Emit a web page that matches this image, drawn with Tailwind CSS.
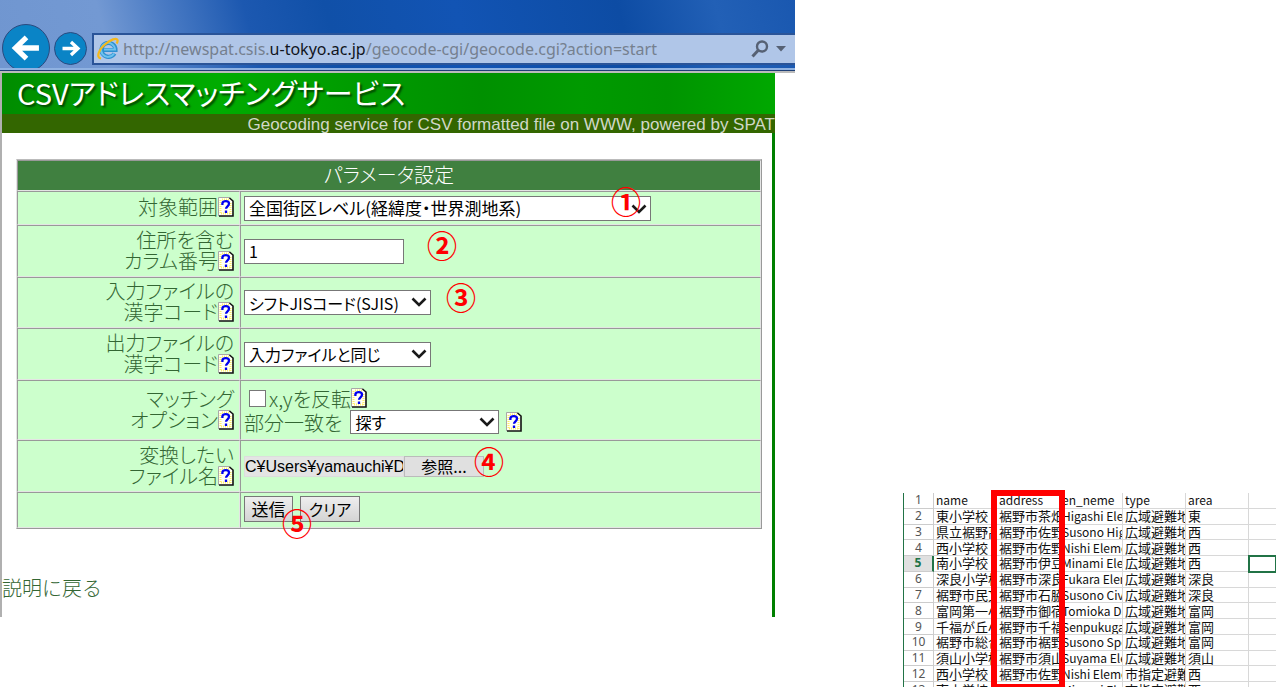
<!DOCTYPE html>
<html lang="ja">
<head>
<meta charset="utf-8">
<title>CSVアドレスマッチングサービス</title>
<script src="https://cdn.jsdelivr.net/npm/@tailwindcss/browser@4"></script>
</head>
<body class="bg-white font-['Noto_Sans_CJK_JP',sans-serif]">
<svg class="hidden" aria-hidden="true">
  <symbol id="help" viewBox="0 0 16 20">
    <path d="M1 1h11l3 3v15H1z" fill="#fffff4"/>
    <path d="M2.500 3v14M12.500 6v11M3 16.500h10M4 2.500h7" stroke="#fff066" stroke-width="2" stroke-dasharray="1 1" fill="none"/>
    <path d="M.5 19V.5H12" stroke="#a8a8a8" fill="none"/>
    <path d="M11.500 1L15 4v15H1" stroke="#111" stroke-width="1.600" fill="none"/>
    <path d="M4.400 8V6.200C4.800 4.700 6 4.200 7.800 4.200c2 0 3.200 1 3.200 2.600 0 2.400-3 2.600-3 5M8 13.500v2.400" stroke="#0000f0" stroke-width="2.300" fill="none"/>
  </symbol>
  <symbol id="chev" viewBox="0 0 16 10"><path d="M1.500 1.500L8 8l6.500-6.500" stroke="#1a1a1a" stroke-width="2.600" fill="none"/></symbol>
</svg>
<main class="grid grid-cols-[795fr_108fr_373fr] items-end">
  <section class="relative mb-[70px]">
    <header class="flex h-[68px] items-end overflow-hidden bg-[linear-gradient(75deg,#7096d0_0%,#7399d3_14%,#4a7bc4_22%,#1c58b0_32%,#1050a8_42%,#1254b4_58%,#0d4ca4_78%,#2260b6_90%,#1a58b0_100%)]">
      <button aria-label="戻る" class="mt-6 ml-[2px] -mb-1 size-12 shrink-0 rounded-full border border-[#2a4a80] bg-[#0a84c6]">
        <svg viewBox="0 0 48 48" class="size-full"><path d="M37.500 24H14M24.500 13L13 24l11.500 11" stroke="#fff" stroke-width="5.500" fill="none"/></svg>
      </button>
      <button aria-label="進む" class="mb-[3px] ml-1 size-[33px] shrink-0 rounded-full border border-[#2a4a80] bg-[#0a84c6]">
        <svg viewBox="0 0 33 33" class="size-full"><path d="M8 16.500h16M17 9.500l7.500 7-7.500 7" stroke="#fff" stroke-width="3.500" fill="none"/></svg>
      </button>
      <div class="mb-[3px] ml-[5px] flex h-8 grow items-center border-y-2 border-l-2 border-[#2a5498] bg-[#b0c6e8] pl-[2px] font-['Noto_Sans',sans-serif]">
        <svg viewBox="0 0 24 24" class="size-6 shrink-0">
          <path d="M18.500 16.500A7 7 0 1 1 19.500 13H6" stroke="#2f8fd0" stroke-width="4.200" fill="none"/>
          <path d="M18 16.500A7 7 0 1 1 19 12.500H8" stroke="#6cc2ee" stroke-width="2" fill="none"/>
          <path d="M5 21.500C-.5 21 3 12 9.500 7c5-4.500 11-6.500 12-4 .3 1-.3 2.500-1 3.500" stroke="#f5b81c" stroke-width="2.200" fill="none"/>
        </svg>
        <a href="#" class="ml-[3px] grow text-[16px] leading-6 whitespace-nowrap text-[#75808f]">http://newspat.csis.<span class="text-[#10151d]">u-tokyo.ac.jp</span>/geocode-cgi/geocode.cgi?action=start</a>
        <svg viewBox="0 0 18 18" class="size-[18px]"><circle cx="11" cy="6.500" r="5" stroke="#566174" stroke-width="2.400" fill="none"/><path d="M7.500 10L1.500 16.500" stroke="#566174" stroke-width="3"/></svg>
        <svg viewBox="0 0 10 6" class="mr-[9px] ml-[7px] h-[6px] w-[10px]"><path d="M0 0h10L5 5.500z" fill="#566174"/></svg>
      </div>
    </header>
    <div class="h-[5px] border-t-2 border-b-2 border-t-[#8fb2e2] border-b-[#bbb] bg-[#1f4076]"></div>
    <div class="mr-5 border-l-2 border-[#b0b0b0]">
      <h1 class="h-[41px] bg-[linear-gradient(90deg,#008c00,#00a000_15%,#00ac00_28%,#009c00_45%,#009000_62%,#009a00_75%,#009400_86%,#00a800)] pl-[15px] text-[29px] leading-[38px] text-white [font-feature-settings:'palt'] [text-shadow:2px_2px_2px_#004400]">CSVアドレスマッチングサービス</h1>
      <p class="h-[19px] bg-[#336600] text-right font-['Liberation_Sans',sans-serif] text-[17px] leading-[21px] whitespace-nowrap text-[#d0d8c8]">Geocoding service for CSV formatted file on WWW, powered by SPAT</p>
      <div class="border-r-3 border-[#008000] pt-[26px] pb-[19px] text-xl leading-[21px] font-light text-[#336633]">
        <form class="mr-[10px] ml-[14px] border border-t-[#bbb] border-r-[#999] border-b-[#999] border-l-[#e4e4e4]">
          <table class="w-full table-fixed border-separate border-spacing-0 bg-[#ccffcc] [font-feature-settings:'palt'] [&_td]:border [&_td]:border-t-[#999] [&_td]:border-r-[#e4e4e4] [&_td]:border-b-[#e4e4e4] [&_td]:border-l-[#999]">
            <colgroup><col class="w-[223px]"><col></colgroup>
            <tbody>
            <tr class="h-[31px]"><th colspan="2" class="border border-t-[#999] border-r-[#e4e4e4] border-b-[#e4e4e4] border-l-[#999] bg-[#408040] pb-[2px] font-light text-white">パラメータ設定</th></tr>
            <tr class="h-[34px]">
              <td class="pr-[5px] pb-[3px] text-right"><label for="range">対象範囲<svg class="inline-block h-5 w-4 align-bottom"><use href="#help"/></svg></label></td>
              <td class="pl-[3px]"><div class="relative w-[407px]"><select id="range" class="block h-[25px] w-full appearance-none border border-[#777] bg-white pl-1 text-[17px] leading-5 font-normal text-black"><option>全国街区レベル(経緯度・世界測地系)</option></select><svg class="pointer-events-none absolute top-2 right-1 h-[10px] w-4"><use href="#chev"/></svg></div></td>
            </tr>
            <tr class="h-[52px]">
              <td class="pr-[5px] pb-[3px] text-right"><label for="column">住所を含む<br>カラム番号<svg class="inline-block h-5 w-4 align-bottom"><use href="#help"/></svg></label></td>
              <td class="pl-[3px]"><input id="column" value="1" class="block h-[25px] w-40 border border-[#777] bg-white pl-1 text-[16px] font-normal text-black"></td>
            </tr>
            <tr class="h-[51px]">
              <td class="pr-[5px] pb-[3px] text-right"><label for="incode">入力ファイルの<br>漢字コード<svg class="inline-block h-5 w-4 align-bottom"><use href="#help"/></svg></label></td>
              <td class="pl-[3px]"><div class="relative w-[187px]"><select id="incode" class="block h-[25px] w-full appearance-none border border-[#777] bg-white pl-1 text-[16px] leading-5 font-normal text-black"><option>シフトJISコード(SJIS)</option></select><svg class="pointer-events-none absolute top-[7px] right-1 h-[10px] w-4"><use href="#chev"/></svg></div></td>
            </tr>
            <tr class="h-[52px]">
              <td class="pr-[5px] pb-[3px] text-right"><label for="outcode">出力ファイルの<br>漢字コード<svg class="inline-block h-5 w-4 align-bottom"><use href="#help"/></svg></label></td>
              <td class="pl-[3px]"><div class="relative w-[187px]"><select id="outcode" class="block h-[25px] w-full appearance-none border border-[#777] bg-white pl-1 text-[16px] leading-5 font-normal text-black"><option>入力ファイルと同じ</option></select><svg class="pointer-events-none absolute top-[7px] right-1 h-[10px] w-4"><use href="#chev"/></svg></div></td>
            </tr>
            <tr class="h-[60px]">
              <td class="pr-[5px] pb-[3px] text-right">マッチング<br>オプション<svg class="inline-block h-5 w-4 align-bottom"><use href="#help"/></svg></td>
              <td class="pl-[3px]">
                <label class="ml-[5px] flex h-6 items-center"><input type="checkbox" class="mr-[3px] size-[17px] appearance-none border border-[#777] bg-white">x,yを反転<svg class="h-5 w-4"><use href="#help"/></svg></label>
                <div class="flex items-center"><label for="partial">部分一致を</label><div class="relative ml-2 w-[149px]"><select id="partial" class="block h-6 w-full appearance-none border border-[#777] bg-white pl-1 text-[16px] leading-5 font-normal text-black"><option>探す</option></select><svg class="pointer-events-none absolute top-[7px] right-1 h-[10px] w-4"><use href="#chev"/></svg></div><svg class="ml-[7px] h-5 w-4"><use href="#help"/></svg></div>
              </td>
            </tr>
            <tr class="h-[52px]">
              <td class="pr-[5px] pb-[3px] text-right"><label for="file">変換したい<br>ファイル名<svg class="inline-block h-5 w-4 align-bottom"><use href="#help"/></svg></label></td>
              <td class="pl-[3px]"><div class="flex h-[21px]"><input id="file" readonly value="C¥Users¥yamauchi¥Documents" class="w-40 border border-[#ddd] bg-[#e4e4e4] font-['Liberation_Sans','Noto_Sans_CJK_JP',sans-serif] text-[16px] font-normal text-black"><button type="button" class="w-20 border border-[#bbb] bg-[#e0e0e0] text-[16px] leading-[19px] font-normal text-black">参照...</button></div></td>
            </tr>
            <tr class="h-9">
              <td></td>
              <td class="pb-[2px] pl-[3px]"><div class="flex gap-[7px]"><button type="button" class="h-[26px] w-[49px] border border-[#777] bg-linear-to-b from-[#eee] to-[#d4d4d4] text-[17px] leading-[22px] font-normal text-black">送信</button><button type="reset" class="h-[26px] w-[60px] border border-[#777] bg-linear-to-b from-[#eee] to-[#d4d4d4] text-[16px] leading-[22px] font-normal text-black">クリア</button></div></td>
            </tr>
            </tbody>
          </table>
        </form>
        <a href="#" class="mt-[48px] inline-block">説明に戻る</a>
      </div>
    </div>
    <div class="text-3xl leading-none font-bold text-[#ff0000]">
      <span class="absolute top-[185px] left-[611px]">①</span>
      <span class="absolute top-[229px] left-[427px]">②</span>
      <span class="absolute top-[281px] left-[446px]">③</span>
      <span class="absolute top-[445px] left-[474px]">④</span>
      <span class="absolute top-[507px] left-[282px]">⑤</span>
    </div>
  </section>

  <section class="relative col-start-3">
    <div class="h-[194px] overflow-hidden border-l border-[#217346]">
      <table class="h-[205px] w-full table-fixed border-separate border-spacing-0 text-[13px] leading-[14px] whitespace-nowrap text-[#111] [&_td]:overflow-hidden [&_td]:border-r [&_td]:border-b [&_td]:border-[#d8d8d8] [&_td]:pl-[2px] [&_td:last-child]:border-r-0 [&_th]:border-r [&_th]:border-b [&_th]:border-[#ccc] [&_th]:font-['Noto_Sans',sans-serif] [&_th]:text-[12px] [&_th]:font-normal [&_th]:text-[#555]">
        <colgroup><col class="w-[30px]"><col class="w-[63px]"><col class="w-[63px]"><col class="w-[63px]"><col class="w-[63px]"><col class="w-[63px]"><col></colgroup>
        <tbody>
        <tr class="text-[12px]"><th>1</th><td>name</td><td>address</td><td>en_neme</td><td>type</td><td>area</td><td></td></tr>
        <tr><th>2</th><td>東小学校</td><td>裾野市茶畑</td><td class="text-[12px]">Higashi Elementary</td><td>広域避難地</td><td>東</td><td></td></tr>
        <tr><th>3</th><td>県立裾野高</td><td>裾野市佐野</td><td class="text-[12px]">Susono High</td><td>広域避難地</td><td>西</td><td></td></tr>
        <tr><th>4</th><td>西小学校</td><td>裾野市佐野</td><td class="text-[12px]">Nishi Elementary</td><td>広域避難地</td><td>西</td><td></td></tr>
        <tr><th class="border-r-2! border-r-[#217346]! bg-[#e0e0e0] font-bold! text-[#217346]!">5</th><td>南小学校</td><td>裾野市伊豆</td><td class="text-[12px]">Minami Elementary</td><td>広域避難地</td><td>西</td><td class="outline-2 -outline-offset-1 outline-[#217346]"></td></tr>
        <tr><th>6</th><td>深良小学校</td><td>裾野市深良</td><td class="text-[12px]">Fukara Elementary</td><td>広域避難地</td><td>深良</td><td></td></tr>
        <tr><th>7</th><td>裾野市民文</td><td>裾野市石脇</td><td class="text-[12px]">Susono Civic</td><td>広域避難地</td><td>深良</td><td></td></tr>
        <tr><th>8</th><td>富岡第一小</td><td>裾野市御宿</td><td class="text-[12px]">Tomioka Dai</td><td>広域避難地</td><td>富岡</td><td></td></tr>
        <tr><th>9</th><td>千福が丘小</td><td>裾野市千福</td><td class="text-[12px]">Senpukugaoka</td><td>広域避難地</td><td>富岡</td><td></td></tr>
        <tr><th>10</th><td>裾野市総合</td><td>裾野市裾野</td><td class="text-[12px]">Susono Sports</td><td>広域避難地</td><td>富岡</td><td></td></tr>
        <tr><th>11</th><td>須山小学校</td><td>裾野市須山</td><td class="text-[12px]">Suyama Elementary</td><td>広域避難地</td><td>須山</td><td></td></tr>
        <tr><th>12</th><td>西小学校</td><td>裾野市佐野</td><td class="text-[12px]">Nishi Elementary</td><td>市指定避難</td><td>西</td><td></td></tr>
        <tr><th>13</th><td>南小学校</td><td>裾野市伊豆</td><td class="text-[12px]">Minami Elementary</td><td>市指定避難</td><td>西</td><td></td></tr>
        </tbody>
      </table>
    </div>
    <div class="absolute -top-[3px] left-[88px] h-[200px] w-[74px] border-6 border-[#ff0000]"></div>
  </section>
</main>
</body>
</html>
